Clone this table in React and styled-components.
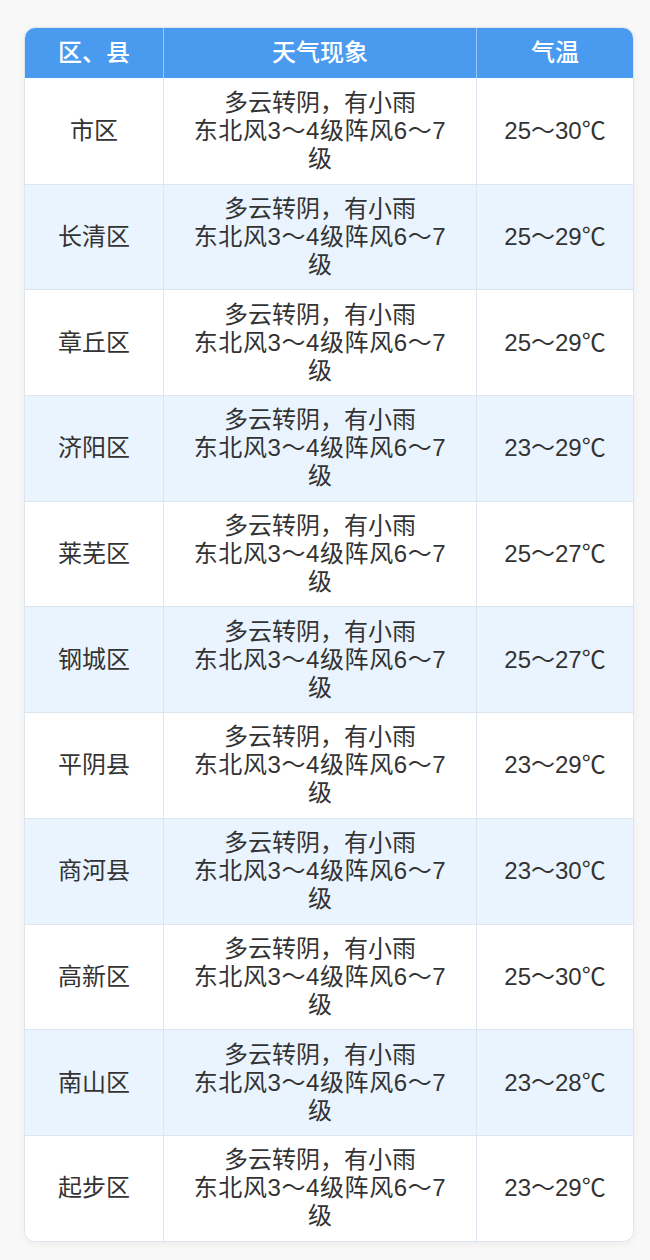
import React from "react";
import styled, { createGlobalStyle } from "styled-components";

const GlobalStyle = createGlobalStyle`
  html, body {
    margin: 0;
    padding: 0;
    background: #f8f8f8;
  }
  body {
    font-family: "Liberation Sans", "Noto Sans CJK SC", sans-serif;
  }
`;

const Page = styled.div`
  padding: 27px 16px 20px 24px;
`;

const Card = styled.div`
  width: 610px;
  box-sizing: border-box;
  border: 1px solid #dde6ef;
  border-radius: 11px;
  overflow: hidden;
  background: #fff;
  box-shadow: 0 2px 8px rgba(0, 0, 0, 0.05);
`;

const Row = styled.div`
  display: grid;
  grid-template-columns: 138px 313px 1fr;
  height: ${(props) => (props.header ? "50px" : "105.7px")};
  background: ${(props) =>
    props.header ? "#4a9bf0" : props.striped ? "#eaf4fe" : "#ffffff"};
  border-top: ${(props) => (props.header ? "none" : "1px solid #dde6ef")};
  box-sizing: border-box;
  &:nth-child(2) {
    border-top: none;
  }
`;

const Cell = styled.div`
  display: flex;
  align-items: center;
  justify-content: center;
  text-align: center;
  font-size: 24px;
  line-height: 28px;
  font-weight: ${(props) => (props.header ? 500 : 400)};
  color: ${(props) => (props.header ? "#ffffff" : "#333333")};
  border-left: 1px solid
    ${(props) => (props.header ? "rgba(255,255,255,0.45)" : "#dde6ef")};
  &:first-child {
    border-left: none;
  }
`;

const Desc = styled.span`
  display: block;
  letter-spacing: ${(props) => (props.wide ? "0.6px" : "0")};
`;

const rows = [
  ["市区", "25～30℃"],
  ["长清区", "25～29℃"],
  ["章丘区", "25～29℃"],
  ["济阳区", "23～29℃"],
  ["莱芜区", "25～27℃"],
  ["钢城区", "25～27℃"],
  ["平阴县", "23～29℃"],
  ["商河县", "23～30℃"],
  ["高新区", "25～30℃"],
  ["南山区", "23～28℃"],
  ["起步区", "23～29℃"],
];

const descLines = ["多云转阴，有小雨", "东北风3～4级阵风6～7", "级"];

export default function App() {
  return (
    <>
      <GlobalStyle />
      <Page>
        <Card>
          <Row header>
            <Cell header>区、县</Cell>
            <Cell header>天气现象</Cell>
            <Cell header>气温</Cell>
          </Row>
          {rows.map(([area, temp], i) => (
            <Row key={area} striped={i % 2 === 1}>
              <Cell>{area}</Cell>
              <Cell>
                <div>
                  {descLines.map((line, j) => (
                    <Desc key={line} wide={j === 1}>
                      {line}
                    </Desc>
                  ))}
                </div>
              </Cell>
              <Cell>{temp}</Cell>
            </Row>
          ))}
        </Card>
      </Page>
    </>
  );
}
